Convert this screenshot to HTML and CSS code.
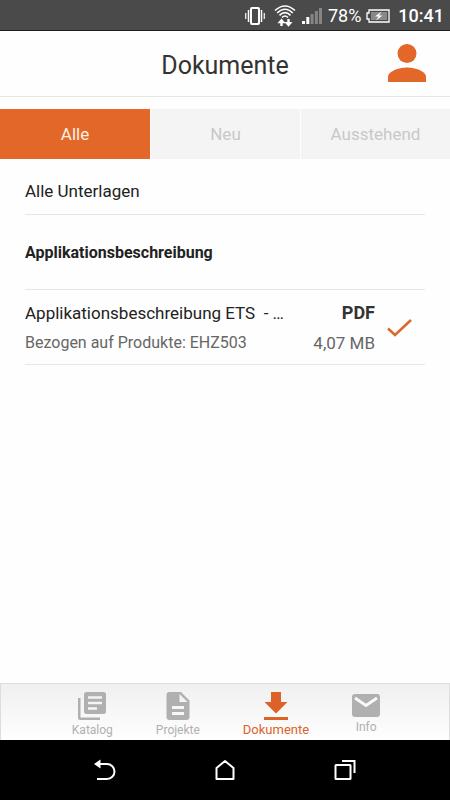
FILE: index.html
```html
<!DOCTYPE html>
<html lang="de">
<head>
<meta charset="utf-8">
<meta name="viewport" content="width=device-width, initial-scale=1">
<title>Dokumente</title>
<link rel="stylesheet" href="styles.css">
</head>
<body>
<div class="status">
  <svg width="20" height="20" viewBox="0 0 20 20" fill="none" stroke="#fff"><rect x="6" y="2" width="8" height="16" rx="1" stroke-width="2"/><path d="M3.500 4v12M16.500 4v12" stroke-width="1.500"/><path d="M.75 7v6M19.250 7v6" stroke-width="1.200"/></svg>
  <svg class="wifi" width="22" height="22" viewBox="0 0 22 22" fill="none" stroke="#fff" stroke-width="1.600"><path d="M1 5.500Q11-3.500 21 5.500M3.200 8Q11 .5 18.800 8M5.500 10.300Q11 5 16.500 10.300M8 12.500Q11 9.500 14 12.500"/><path d="M7.500 21V17M14.500 14v4" stroke-width="2.400"/><path d="M3.500 18.200l4-4.700 4 4.700zM10.500 17l4 4.700 4-4.700z" fill="#fff" stroke="none"/></svg>
  <svg width="20" height="16" viewBox="0 0 20 16"><path fill="#fff" d="M0 13h3v3H0zM4.300 9h3v7h-3z"/><path fill="#858585" d="M8.600 6h3v10h-3zM12.900 3h3v13h-3zM17 0h3v16h-3z"/></svg>
  <span class="percent">78%</span>
  <svg width="24" height="14" viewBox="0 0 24 14"><path d="M3 1h20v12H3V10H1V4h2z" fill="none" stroke="#fff" stroke-width="1.300"/><path d="M5 3h16v8H5z" fill="#888"/><path d="M15.500 2.500L9 7.600h3.500L10 11.500l6.500-5H13z" fill="#fff"/></svg>
  <span class="clock">10:41</span>
</div>
<header class="header">
  <h1>Dokumente</h1>
  <button class="profile" aria-label="Profil"><svg width="38" height="38" viewBox="0 0 38 38" fill="currentColor"><circle cx="19" cy="9.500" r="9.500"/><path d="M0 38v-5c0-6.500 12.500-9.500 19-9.500S38 26.500 38 33v5z"/></svg></button>
</header>
<div class="tabs">
  <button class="tab active">Alle</button>
  <button class="tab">Neu</button>
  <button class="tab">Ausstehend</button>
</div>
<main class="list">
  <p class="filter">Alle Unterlagen</p>
  <h2>Applikationsbeschreibung</h2>
  <article class="doc">
    <div class="info">
      <p class="title">Applikationsbeschreibung ETS&nbsp; - …</p>
      <p class="sub">Bezogen auf Produkte: EHZ503</p>
    </div>
    <div class="meta">
      <p class="type">PDF</p>
      <p class="sub">4,07 MB</p>
    </div>
    <svg width="25" height="18" viewBox="0 0 25 18" fill="none" stroke="#d96a2e" stroke-width="2.600"><path d="M1 9.500l7 6.500L24 1"/></svg>
  </article>
</main>
<nav class="nav">
  <a href="#"><svg width="28" height="28" viewBox="0 0 28 28"><path fill="currentColor" fill-rule="evenodd" d="M0 6h2.500v19.500H22V28H2a2 2 0 0 1-2-2zM8.500 0h17A2.500 2.500 0 0 1 28 2.500v17a2.500 2.500 0 0 1-2.500 2.500h-17A2.500 2.500 0 0 1 6 19.500v-17A2.500 2.500 0 0 1 8.500 0zM10 4.200v2.600h14V4.200zM10 9.700v2.600h14V9.700zM10 15.200v2.600h9v-2.600z"/></svg><span>Katalog</span></a>
  <a href="#"><svg width="24" height="28" viewBox="0 0 24 28"><path fill="currentColor" fill-rule="evenodd" d="M3.500 0H15l8.500 8.500V25a3 3 0 0 1-3 3h-17a3 3 0 0 1-3-3V3a3 3 0 0 1 3-3zM13.500 2v8h8zM6 14v3h12v-3zM6 20v3h12v-3z"/></svg><span>Projekte</span></a>
  <a href="#" class="current"><svg width="24" height="28" viewBox="0 0 24 28" fill="currentColor"><path d="M7 0h10v10h6.500L12 21.500.5 10H7zM0 25h24v3H0z"/></svg><span>Dokumente</span></a>
  <a href="#"><svg width="28" height="25" viewBox="0 0 28 25"><rect y="2" width="28" height="23" rx="3" fill="currentColor"/><path d="M3 6l11 7.500L25 6" fill="none" stroke="#fafafa" stroke-width="2.800"/></svg><span>Info</span></a>
</nav>
<div class="system">
  <button aria-label="Zurück"><svg width="22" height="22" viewBox="0 0 22 22" fill="none" stroke="#fff" stroke-width="2"><path d="M4 5h9a7.500 7.500 0 0 1 0 15H3"/><path d="M0 5l6.500-4.500v9z" fill="#fff" stroke="none"/></svg></button>
  <button aria-label="Startseite"><svg width="22" height="22" viewBox="0 0 22 22" fill="none" stroke="#fff" stroke-width="2" stroke-linejoin="round"><path d="M2.500 9L11 2l8.500 7v11h-17z"/></svg></button>
  <button aria-label="Letzte Apps"><svg width="22" height="22" viewBox="0 0 22 22" fill="none" stroke="#fff" stroke-width="2"><rect x="1.500" y="6" width="15" height="14" rx=".5"/><path d="M8 2h12.500v12"/></svg></button>
</div>
</body>
</html>
```
FILE: styles.css
```css
* {
  box-sizing: border-box;
}

body {
  margin: 0;
  min-height: 100vh;
  display: flex;
  flex-direction: column;
  background: #fefefe;
  color: #222;
  font-family: Roboto, sans-serif;
  font-size: 17px;
  line-height: 24px;
}

h1, h2, p {
  margin: 0;
}

svg {
  display: block;
  flex: none;
}

button {
  border: 0;
  padding: 0;
  background: none;
  font: inherit;
}

.status {
  height: 31px;
  padding: 2px 6px 0 0;
  display: flex;
  align-items: center;
  justify-content: flex-end;
  background: #4a4a4a;
  border-bottom: 1px solid #1c1c1c;
  color: #fff;
}

.wifi {
  margin: 0 6px 0 9px;
}

.percent {
  margin: 0 5px 0 6px;
  font-size: 18px;
}

.clock {
  margin-left: 8px;
  font-size: 18px;
  font-weight: 500;
}

.header {
  height: 66px;
  padding: 0 24px 1px;
  display: grid;
  grid-template-columns: 1fr auto 1fr;
  align-items: center;
  border-bottom: 1px solid #e6e6e6;
}

h1 {
  grid-column: 2;
  padding-top: 5px;
  font-size: 25px;
  line-height: 32px;
  font-weight: 400;
  color: #333;
}

.profile {
  justify-self: end;
  color: #e4672a;
}

.tabs {
  margin-top: 12px;
  display: grid;
  grid-template-columns: repeat(3, 1fr);
}

.tab {
  height: 50px;
  background: #f4f4f4;
  color: #c8c8c8;
}

.tab + .tab {
  border-left: 1px solid #fefefe;
}

.tab.active {
  background: #e4672a;
  color: #fff0e0;
}

.list {
  flex: 1;
  padding: 0 25px;
}

.filter,
h2,
.doc {
  border-bottom: 1px solid #e6e6e6;
}

.filter {
  padding: 20px 0 11px;
}

h2 {
  padding: 26px 0 24px;
  font-size: 16px;
  line-height: 24px;
  font-weight: 700;
}

.doc {
  height: 75px;
  padding: 2px 13px 0 0;
  display: flex;
  align-items: center;
  line-height: 30px;
}

.info {
  flex: 1;
  min-width: 0;
}

.title {
  overflow: hidden;
  white-space: nowrap;
  text-overflow: ellipsis;
}

.sub {
  color: #666;
}

.info .sub {
  font-size: 16px;
}

.meta {
  margin-right: 12px;
  text-align: right;
}

.type {
  font-size: 18px;
  font-weight: 700;
  color: #333;
}

.nav {
  height: 57px;
  padding: 8px 0 0 2px;
  display: flex;
  justify-content: center;
  gap: 43px;
  border: 1px solid #ddd;
  border-bottom: 0;
  background: linear-gradient(#f0f0f0, #fefefe);
  font-size: 12px;
  line-height: 20px;
}

.nav a {
  display: flex;
  flex-direction: column;
  align-items: center;
  color: #b0b0b0;
  text-decoration: none;
}

.nav .current {
  color: #dc622a;
  font-size: 13px;
}

.system {
  height: 60px;
  display: flex;
  align-items: center;
  justify-content: center;
  gap: 98px;
  background: #000;
}
```
